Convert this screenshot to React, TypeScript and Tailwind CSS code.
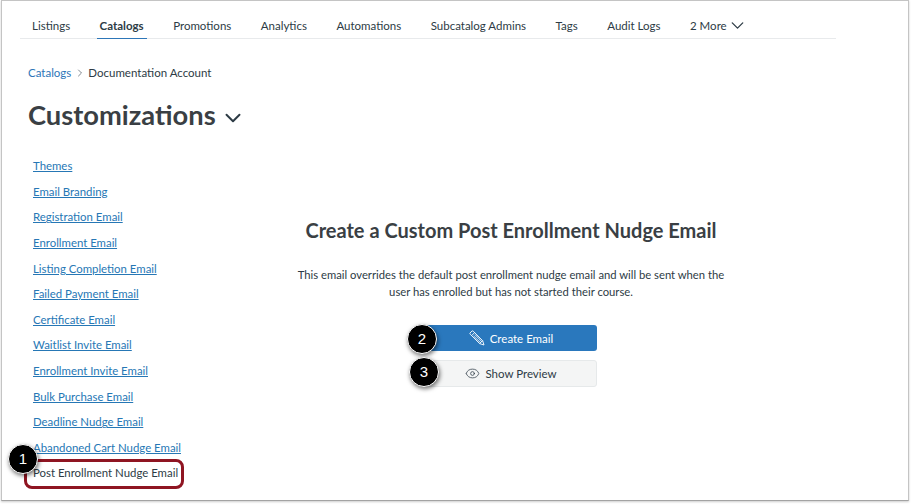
import { ChevronDown, ChevronRight, Eye } from 'lucide-react';

const tabs = [
  { label: 'Listings' },
  { label: 'Catalogs', active: true },
  { label: 'Promotions' },
  { label: 'Analytics' },
  { label: 'Automations' },
  { label: 'Subcatalog Admins' },
  { label: 'Tags' },
  { label: 'Audit Logs' },
];

const links = [
  'Themes',
  'Email Branding',
  'Registration Email',
  'Enrollment Email',
  'Listing Completion Email',
  'Failed Payment Email',
  'Certificate Email',
  'Waitlist Invite Email',
  'Enrollment Invite Email',
  'Bulk Purchase Email',
  'Deadline Nudge Email',
  'Abandoned Cart Nudge Email',
];

function Badge({ n, className }: { n: number; className: string }) {
  return (
    <div
      className={`absolute flex h-[30px] w-[30px] items-center justify-center rounded-full border border-white bg-black font-['Liberation_Sans',sans-serif] text-[15px] text-white shadow-[1px_2px_4px_rgba(0,0,0,0.55)] ${className}`}
    >
      {n}
    </div>
  );
}

function PencilIcon() {
  return (
    <svg viewBox="0 0 16 16" className="h-[16px] w-[16px]" fill="none" stroke="currentColor" strokeWidth="0.9" strokeLinejoin="round">
      <path d="M1 3 L3 1 Q3.6 0.6 4.2 1.2 L13.6 10.6 L15 15 L10.6 13.6 L1.2 4.2 Q0.6 3.6 1 3 Z" />
      <path d="M2.6 5.6 L5.6 2.6 M4.6 6 L12 13.2 M6 4.6 L13.2 12 M10.6 13.6 L13.6 10.6" />
    </svg>
  );
}

export default function App() {
  return (
    <div className="h-[504px] w-[911px] overflow-hidden bg-white font-['Lato',sans-serif] text-[#2d3b45]">
      <div className="relative ml-px mr-[2px] h-[501px] overflow-hidden border border-[#c4c4c4] border-b-[#a3a3a3] shadow-[0_1px_2px_rgba(0,0,0,0.2)]">
        <nav className="ml-[18px] flex h-[38px] w-[816px] items-end gap-[29.5px] border-b border-[#e8eaec] pl-[12px] text-[11.5px]">
          {tabs.map((t) => (
            <div key={t.label} className={`relative h-[21px] shrink-0 whitespace-nowrap ${t.active ? 'font-bold' : ''}`}>
              {t.label}
              {t.active && <div className="absolute -bottom-px -left-[3px] -right-[3px] h-[1.5px] bg-[#2d76b8]" />}
            </div>
          ))}
          <div className="flex h-[21px] items-start whitespace-nowrap">
            2 More
            <ChevronDown className="-mt-[2px] h-[21px] w-[21px]" strokeWidth={1.5} />
          </div>
        </nav>

        <div className="ml-[26px] mt-[25px] flex items-center text-[11.5px]">
          <span className="text-[#2d76b8]">Catalogs</span>
          <ChevronRight className="mx-[2.5px] h-[12px] w-[12px] text-[#55626c]" strokeWidth={1.5} />
          <span>Documentation Account</span>
        </div>

        <div className="ml-[26px] mt-[16px] flex items-center">
          <h1 className="text-[27.3px] font-bold leading-[36px] text-[#3a3f44]">Customizations</h1>
          <ChevronDown className="ml-[4px] mt-[5px] h-[26px] w-[26px]" strokeWidth={1.8} />
        </div>

        <div className="mt-[20px] flex">
          <ul className="ml-[31px] flex w-[198.5px] shrink-0 flex-col text-[11.4px] leading-[25.6px] text-[#2677b5]">
            {links.map((l) => (
              <li key={l} className="h-[25.6px] underline">
                {l}
              </li>
            ))}
            <li className="h-[25.6px] text-[#2d3b45]">Post Enrollment Nudge Email</li>
          </ul>

          <div className="flex w-[559px] flex-col items-center pt-[64px]">
            <h2 className="text-[20px] font-bold leading-[26px] text-[#3a3f44]">Create a Custom Post Enrollment Nudge Email</h2>
            <p className="mt-[24px] w-[440px] text-center text-[11.25px] leading-[16.5px]">
              This email overrides the default post enrollment nudge email and will be sent when the user has enrolled but has not started their course.
            </p>
            <button className="mt-[25px] flex h-[26px] w-[172px] items-center justify-center gap-[5px] rounded-[3px] bg-[#2a78bd] text-[11.5px] text-white">
              <PencilIcon />
              Create Email
            </button>
            <button className="mt-[9px] flex h-[27px] w-[172px] items-center justify-center gap-[5px] rounded-[3px] border border-[#e6e9ea] bg-[#f4f5f5] text-[11.5px]">
              <Eye className="h-[15px] w-[15px]" strokeWidth={1.2} />
              Show Preview
            </button>
          </div>
        </div>

        <div className="absolute left-[22px] top-[458px] h-[30px] w-[160px] rounded-[8px] border-[3px] border-[#8f1522]" />
        <Badge n={1} className="left-[6px] top-[443px]" />
        <Badge n={2} className="left-[405px] top-[323px]" />
        <Badge n={3} className="left-[407px] top-[356px]" />
      </div>
    </div>
  );
}
